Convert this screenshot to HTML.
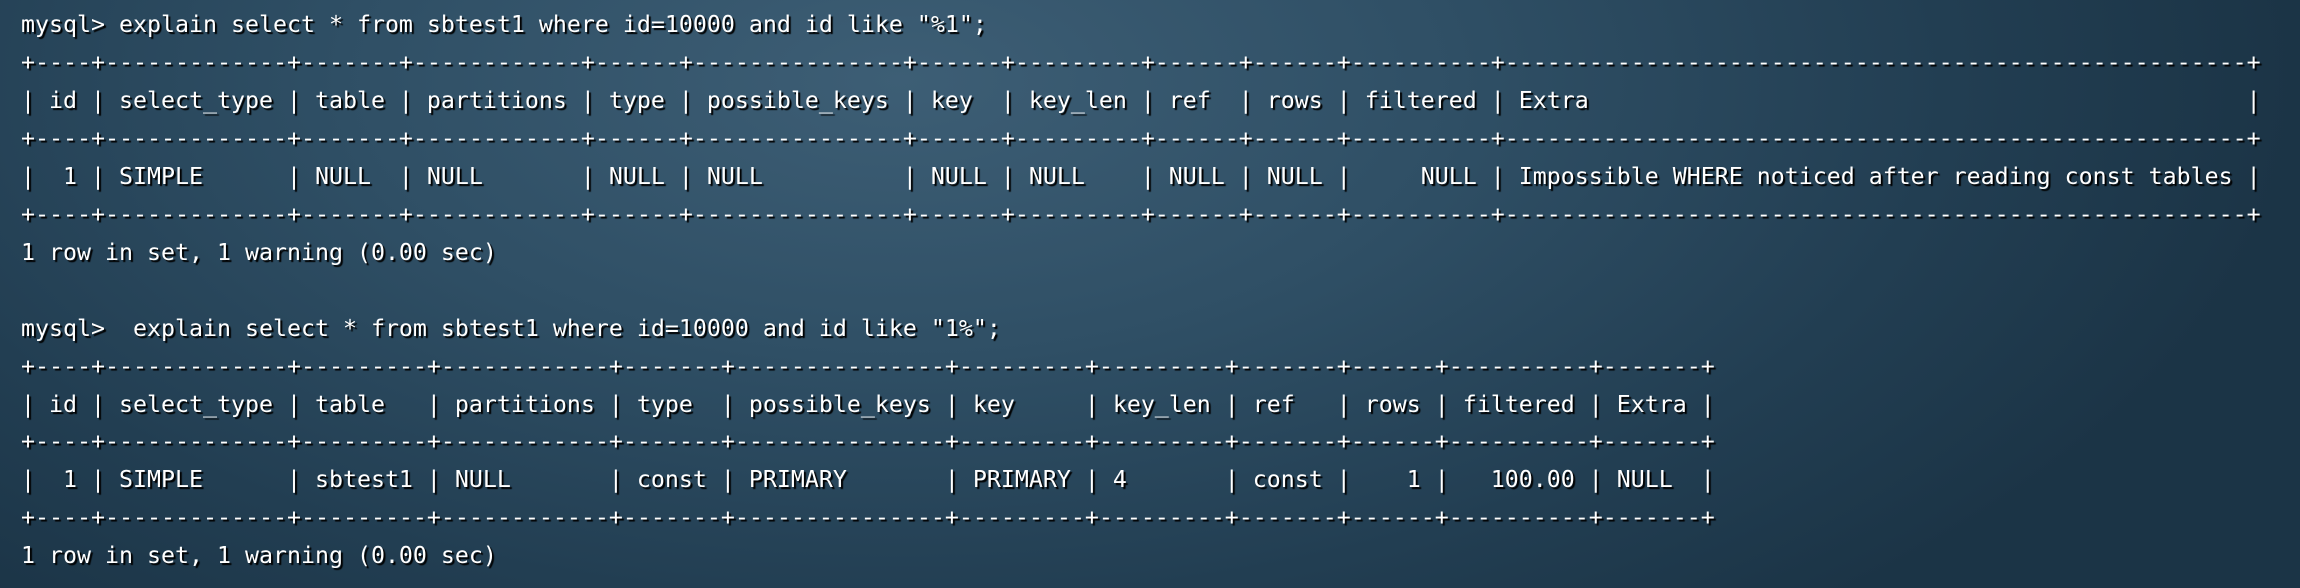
<!DOCTYPE html>
<html><head><meta charset="utf-8"><style>
html,body{margin:0;padding:0;}
body{width:2300px;height:588px;overflow:hidden;
background:radial-gradient(ellipse 1400px 700px at 900px 80px,#3d5e75 0%,#2f4f65 40%,#223e52 75%,#1b3446 100%);}
pre{margin:0;position:absolute;left:21px;top:6px;font-family:"DejaVu Sans Mono","Liberation Mono",monospace;
font-size:23.26px;line-height:37.95px;color:#fff;text-shadow:2px 2px 1px #000;}
</style></head><body><pre>mysql&gt; explain select * from sbtest1 where id=10000 and id like "%1";
+----+-------------+-------+------------+------+---------------+------+---------+------+------+----------+-----------------------------------------------------+
| id | select_type | table | partitions | type | possible_keys | key  | key_len | ref  | rows | filtered | Extra                                               |
+----+-------------+-------+------------+------+---------------+------+---------+------+------+----------+-----------------------------------------------------+
|  1 | SIMPLE      | NULL  | NULL       | NULL | NULL          | NULL | NULL    | NULL | NULL |     NULL | Impossible WHERE noticed after reading const tables |
+----+-------------+-------+------------+------+---------------+------+---------+------+------+----------+-----------------------------------------------------+
1 row in set, 1 warning (0.00 sec)

mysql&gt;  explain select * from sbtest1 where id=10000 and id like "1%";
+----+-------------+---------+------------+-------+---------------+---------+---------+-------+------+----------+-------+
| id | select_type | table   | partitions | type  | possible_keys | key     | key_len | ref   | rows | filtered | Extra |
+----+-------------+---------+------------+-------+---------------+---------+---------+-------+------+----------+-------+
|  1 | SIMPLE      | sbtest1 | NULL       | const | PRIMARY       | PRIMARY | 4       | const |    1 |   100.00 | NULL  |
+----+-------------+---------+------------+-------+---------------+---------+---------+-------+------+----------+-------+
1 row in set, 1 warning (0.00 sec)</pre></body></html>
